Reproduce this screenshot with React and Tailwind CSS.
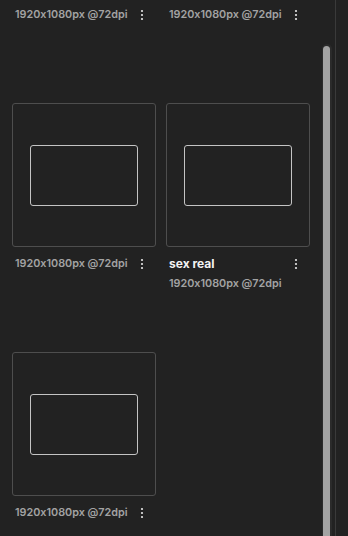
import React from "react";

const items = [
  { id: 1, title: null },
  { id: 2, title: null },
  { id: 3, title: null },
  { id: 4, title: "sex real" },
  { id: 5, title: null },
];

function Dots() {
  return (
    <svg width="4" height="12" viewBox="0 0 4 12" className="text-[#e6e6e6]">
      <circle cx="2" cy="2" r="1.1" fill="currentColor" />
      <circle cx="2" cy="6" r="1.1" fill="currentColor" />
      <circle cx="2" cy="10" r="1.1" fill="currentColor" />
    </svg>
  );
}

function SizeCard({ title }) {
  return (
    <div className="w-[144px] h-[189px]">
      <div className="w-[144px] h-[144px] border border-[#4e4e4e] rounded-[3px] flex items-center justify-center">
        <div className="w-[108px] h-[61px] border border-[#c4c4c4] rounded-[3px]" />
      </div>
      <div className="mt-[8px] pl-[3px] pr-[12px]">
        {title ? (
          <>
            <div className="flex items-center justify-between h-[18px]">
              <span className="text-[12px] font-bold text-[#f2f2f2]">{title}</span>
              <Dots />
            </div>
            <div className="mt-[2px] h-[19px] flex items-center text-[10.8px] font-semibold text-[#a3a3a3]">
              1920x1080px @72dpi
            </div>
          </>
        ) : (
          <div className="flex items-center justify-between h-[18px]">
            <span className="text-[10.8px] font-semibold text-[#a3a3a3]">1920x1080px @72dpi</span>
            <Dots />
          </div>
        )}
      </div>
    </div>
  );
}

export default function App() {
  return (
    <div
      className="w-[348px] h-[536px] bg-[#222222] flex overflow-hidden [font-feature-settings:'calt'_0]"
      style={{ fontFamily: "Inter, Lato, sans-serif" }}
    >
      <div className="w-[322px] h-full overflow-hidden">
        {/* list is scrolled, first row cut off */}
        <div className="-mt-[146px] pl-3 grid grid-cols-[144px_144px] gap-x-[10px] gap-y-[60px] items-start">
          {items.map((it) => (
            <SizeCard key={it.id} title={it.title} />
          ))}
        </div>
      </div>
      <div className="w-[10px] h-full pt-[44px]">
        <div className="h-full bg-[#2b2b2b] rounded-t-full pt-[2px] pl-[1px] pr-[2px]">
          <div className="h-full bg-[#a3a3a3] rounded-t-full" />
        </div>
      </div>
      <div className="w-[3px]" />
      <div className="w-px h-full bg-[#3a3a3a]" />
    </div>
  );
}
